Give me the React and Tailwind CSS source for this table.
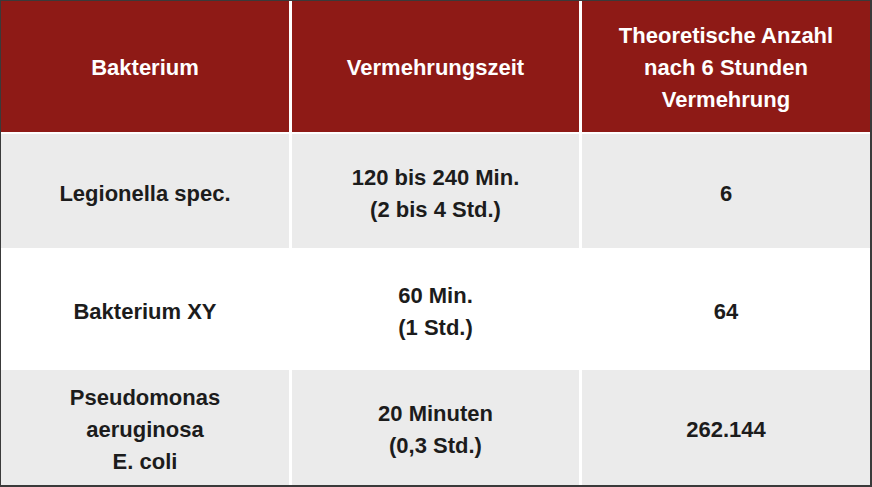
const header = [
  'Bakterium',
  'Vermehrungszeit',
  ['Theoretische Anzahl', 'nach 6 Stunden', 'Vermehrung'],
];

const rows = [
  { bg: 'bg-[#ebebeb]', cells: ['Legionella spec.', ['120 bis 240 Min.', '(2 bis 4 Std.)'], '6'] },
  { bg: 'bg-white', cells: ['Bakterium XY', ['60 Min.', '(1 Std.)'], '64'] },
  { bg: 'bg-[#ebebeb]', cells: [['Pseudomonas', 'aeruginosa', 'E. coli'], ['20 Minuten', '(0,3 Std.)'], '262.144'] },
];

const Lines = ({ value }) => {
  const lines = Array.isArray(value) ? value : [value];
  return lines.map((l, i) => <div key={i}>{l}</div>);
};

export default function App() {
  return (
    <div className="w-[872px] h-[487px] bg-[#3a3a3a] pt-px pl-px pr-[2px] pb-[2px]">
      <div
        className="grid h-full bg-white gap-x-[3px] gap-y-[2px] grid-cols-[288px_287px_288px] grid-rows-[131px_114px_118px_115px] text-[22px] leading-[32px] font-bold text-center"
        style={{ fontFamily: '"Liberation Sans", Arial, sans-serif' }}
      >
        {header.map((h, i) => (
          <div key={i} className="bg-[#8e1a16] text-white flex flex-col items-center justify-center pt-[2px]">
            <Lines value={h} />
          </div>
        ))}
        {rows.map((r, ri) =>
          r.cells.map((c, ci) => (
            <div key={`${ri}-${ci}`} className={`${r.bg} text-[#1c1c1c] flex flex-col items-center justify-center pt-[5px]`}>
              <Lines value={c} />
            </div>
          ))
        )}
      </div>
    </div>
  );
}
